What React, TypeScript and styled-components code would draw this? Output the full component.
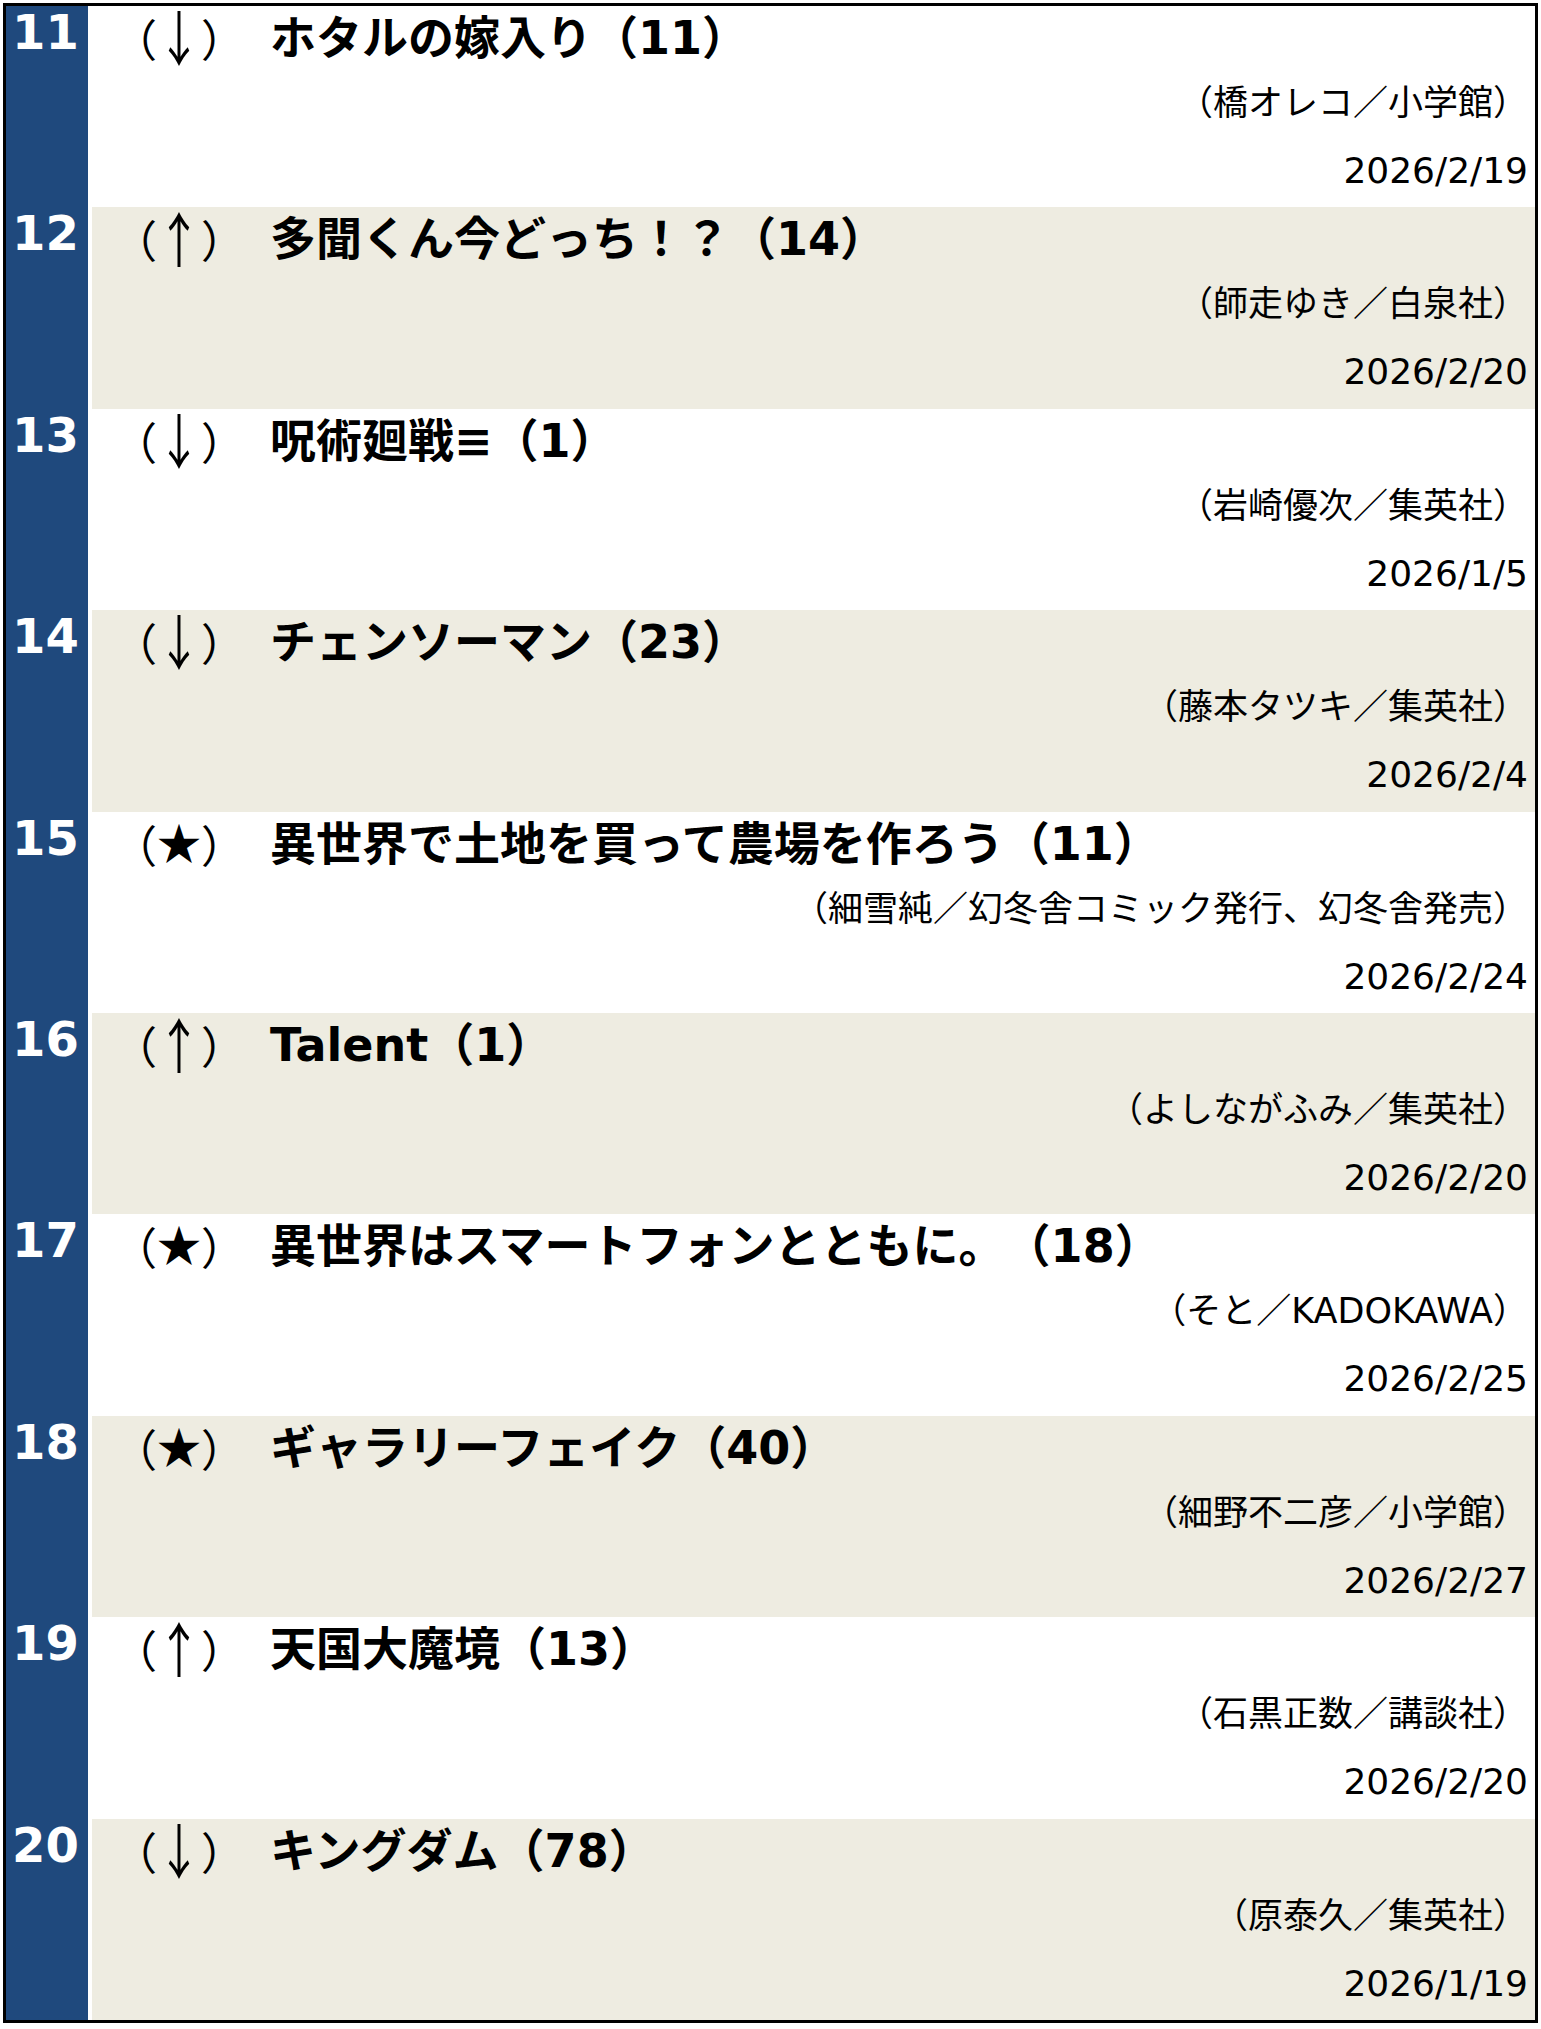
import styled, { createGlobalStyle } from "styled-components";

const GlobalStyle = createGlobalStyle`
  html, body {
    margin: 0;
    padding: 0;
    background: #ffffff;
  }
  body {
    font-family: "DejaVu Sans", "Noto Sans CJK JP", sans-serif;
    color: #000000;
    text-spacing-trim: space-all;
  }
`;

type Move = "up" | "down" | "new";

type Entry = {
  rank: number;
  move: Move;
  title: string;
  credit: string;
  date: string;
};

const entries: Entry[] = [
  { rank: 11, move: "down", title: "ホタルの嫁入り（11）", credit: "（橋オレコ／小学館）", date: "2026/2/19" },
  { rank: 12, move: "up", title: "多聞くん今どっち！？（14）", credit: "（師走ゆき／白泉社）", date: "2026/2/20" },
  { rank: 13, move: "down", title: "呪術廻戦≡（1）", credit: "（岩崎優次／集英社）", date: "2026/1/5" },
  { rank: 14, move: "down", title: "チェンソーマン（23）", credit: "（藤本タツキ／集英社）", date: "2026/2/4" },
  {
    rank: 15,
    move: "new",
    title: "異世界で土地を買って農場を作ろう（11）",
    credit: "（細雪純／幻冬舎コミック発行、幻冬舎発売）",
    date: "2026/2/24",
  },
  { rank: 16, move: "up", title: "Talent（1）", credit: "（よしながふみ／集英社）", date: "2026/2/20" },
  { rank: 17, move: "new", title: "異世界はスマートフォンとともに。（18）", credit: "（そと／KADOKAWA）", date: "2026/2/25" },
  { rank: 18, move: "new", title: "ギャラリーフェイク（40）", credit: "（細野不二彦／小学館）", date: "2026/2/27" },
  { rank: 19, move: "up", title: "天国大魔境（13）", credit: "（石黒正数／講談社）", date: "2026/2/20" },
  { rank: 20, move: "down", title: "キングダム（78）", credit: "（原泰久／集英社）", date: "2026/1/19" },
];

const moveMark: Record<Move, string> = {
  up: "↑",
  down: "↓",
  new: "★",
};

const Page = styled.div`
  padding: 3px;
`;

const Table = styled.div`
  border: 3px solid #000000;
  height: 2014px;
  display: grid;
  grid-template-rows: repeat(10, 1fr);
`;

const Row = styled.div`
  display: grid;
  grid-template-columns: 82px 1fr;
  column-gap: 4px;
  min-height: 0;
`;

const Rank = styled.div`
  background: #1f497d;
  color: #ffffff;
  font-family: "DejaVu Sans", sans-serif;
  font-weight: 700;
  font-size: 48px;
  line-height: 48px;
  text-align: center;
  padding: 2px 3px 0 0;
`;

const Body = styled.div<{ $shaded: boolean }>`
  background: ${(p) => (p.$shaded ? "#eeece1" : "#ffffff")};
  display: flex;
  flex-direction: column;
  padding: 10px 7px 0 0;
`;

const TitleLine = styled.div`
  display: grid;
  grid-template-columns: 178px 1fr;
  height: 44px;
  white-space: nowrap;
`;

const Mark = styled.span`
  font-family: "Noto Sans CJK JP", sans-serif;
  font-weight: 400;
  font-size: 44px;
  line-height: 44px;
  padding-left: 21px;
`;

// arrows in this font are short, so they are stretched to the bracket height
const Symbol = styled.span<{ $arrow: boolean }>`
  display: inline-block;
  width: 1em;
  text-align: center;
  transform: ${(p) =>
    p.$arrow ? "translateY(-3px) scaleY(1.35)" : "translateY(-3px)"};
`;

const Title = styled.span`
  font-family: "DejaVu Sans", "Noto Sans CJK JP", sans-serif;
  font-weight: 700;
  font-size: 46px;
  line-height: 44px;
`;

const Credit = styled.div`
  margin-top: 26px;
  font-size: 35px;
  line-height: 34px;
  height: 34px;
  text-align: right;
  white-space: nowrap;
`;

const DateText = styled.div`
  margin-top: 34px;
  font-size: 36px;
  line-height: 34px;
  height: 34px;
  text-align: right;
`;

export default function App() {
  return (
    <Page>
      <GlobalStyle />
      <Table>
        {entries.map((e, i) => (
          <Row key={e.rank}>
            <Rank>{e.rank}</Rank>
            <Body $shaded={i % 2 === 1}>
              <TitleLine>
                <Mark>
                  （<Symbol $arrow={e.move !== "new"}>{moveMark[e.move]}</Symbol>）
                </Mark>
                <Title>{e.title}</Title>
              </TitleLine>
              <Credit>{e.credit}</Credit>
              <DateText>{e.date}</DateText>
            </Body>
          </Row>
        ))}
      </Table>
    </Page>
  );
}
